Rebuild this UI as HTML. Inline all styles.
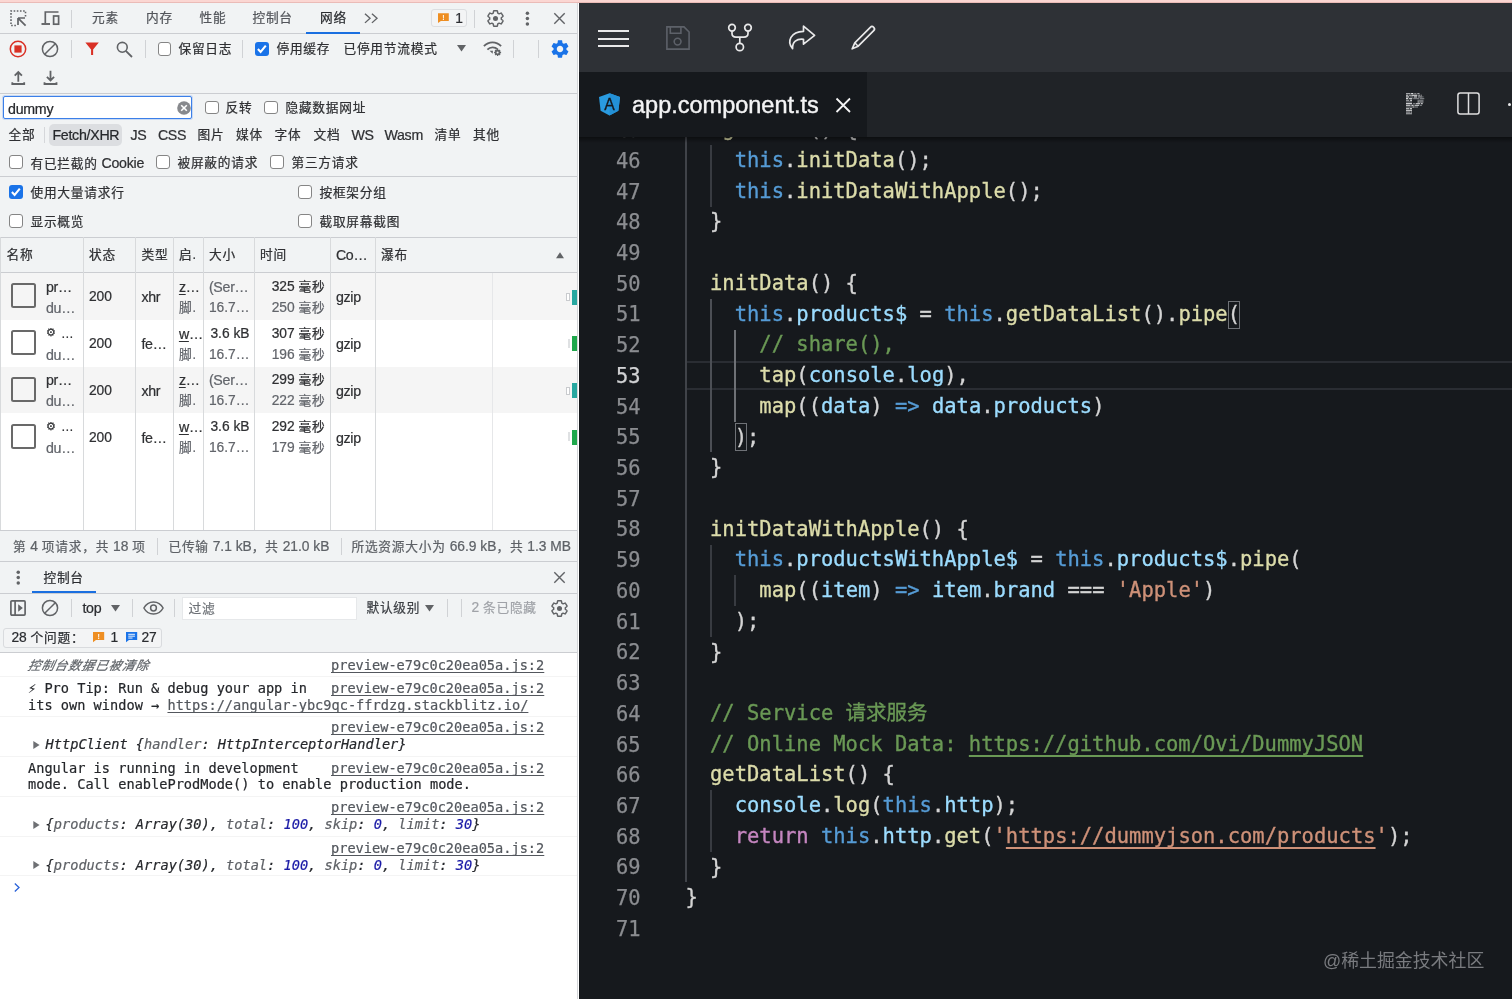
<!DOCTYPE html>
<html lang="zh-CN">
<head>
<meta charset="utf-8">
<title>DevTools Network + StackBlitz editor</title>
<style>
*{box-sizing:border-box;margin:0;padding:0;text-decoration-skip-ink:none}
html,body{width:1512px;height:999px;overflow:hidden;background:#fff}
body{position:relative;font-family:"Liberation Sans","Noto Sans CJK SC",sans-serif;font-size:13.5px;color:#2f3033}
div,span,svg{position:absolute}
span.i{position:static}
.t{white-space:nowrap;line-height:20px;height:20px;-webkit-text-stroke:0.22px;font-size:12.7px;letter-spacing:0.8px;padding-left:0.4px}
.g{color:#62656b}
.la{font-size:14.2px;letter-spacing:-0.27px}
.ld{font-size:13.8px;letter-spacing:0}
.hl{height:1px;background:#cbcdd1;left:0;width:578px}
.vl{width:1px;background:#cbcdd1}
.sep{width:1px;background:#d0d2d5;height:18px}
svg{overflow:visible}
.cb{width:13.5px;height:13.5px;border:1.2px solid #858585;border-radius:3px;background:#fff}
.cbx{width:13.5px;height:13.5px;border-radius:3px;background:#1a73e8}
.m{font-family:"DejaVu Sans Mono","Liberation Mono","Noto Sans CJK SC",monospace;font-size:13.64px;white-space:pre;line-height:16.2px;height:16.2px;color:#25272b;-webkit-text-stroke:0.2px}
.mi{font-style:oblique}
.lk{color:#53575d;text-decoration:underline;text-underline-offset:2px}
.num{color:#1a1aa6}
.cl{font-family:"DejaVu Sans Mono","Liberation Mono","Noto Sans CJK SC",monospace;font-size:20.485px;white-space:pre;line-height:30.72px;height:30.72px;color:#d4d4d4;left:685.4px;-webkit-text-stroke:0.35px}
.ln{font-family:"DejaVu Sans Mono","Liberation Mono",monospace;font-size:20.41px;white-space:pre;line-height:30.72px;height:30.72px;color:#8b8d91;left:580px;width:60.5px;text-align:right;-webkit-text-stroke:0.25px}
.k{color:#569cd6}.f{color:#dcdcaa}.v{color:#9cdcfe}.c{color:#6a9955}.s{color:#ce9178}.r{color:#c586c0}
.u{text-decoration:underline;text-underline-offset:4px;text-decoration-thickness:2px}
.ig{width:2px;background:#383b41}
</style>
</head>
<body>
<div id="left" style="left:0;top:0;width:578px;height:999px;overflow:hidden;will-change:transform"><div style="left:0;top:0;width:578px;height:999px;background:#f1f3f4"></div>
<svg style="left:10px;top:10px" width="17" height="17" viewBox="0 0 17 17"><path d="M15.5 6.5V1H1v14.5h5.5" fill="none" stroke="#616366" stroke-width="1.6" stroke-dasharray="1.6 1.55"/><path d="M8 8h7M8 8v7M8.3 8.3L15.6 15.6" fill="none" stroke="#616366" stroke-width="1.7"/></svg>
<svg style="left:41px;top:11px" width="19" height="15" viewBox="0 0 19 15"><path d="M4.3 12V1h13.2" fill="none" stroke="#616366" stroke-width="1.7"/><path d="M0.5 13h8.5" fill="none" stroke="#616366" stroke-width="1.9"/><rect x="12.6" y="5" width="5" height="8.2" fill="none" stroke="#616366" stroke-width="1.7"/></svg>
<div class="sep" style="left:71px;top:9.5px;height:18px;"></div>
<div class="t " style="left:91.5px;top:8.25px;color:#53565b">元素</div>
<div class="t " style="left:145.5px;top:8.25px;color:#53565b">内存</div>
<div class="t " style="left:199px;top:8.25px;color:#53565b">性能</div>
<div class="t " style="left:252px;top:8.25px;color:#53565b">控制台</div>
<div class="t " style="left:319.5px;top:8.25px;color:#2a2c30">网络</div>
<svg style="left:364.3px;top:13.2px" width="14.5" height="10.6" viewBox="0 0 15 12" preserveAspectRatio="none"><path d="M1 0.8L6.3 6L1 11.2M8.2 0.8L13.5 6L8.2 11.2" fill="none" stroke="#616366" stroke-width="1.4"/></svg>
<div style="left:431px;top:9.3px;width:36px;height:17.5px;border:1px solid #dcdee1;border-radius:3px;background:#f3f4f5"></div>
<svg style="left:438px;top:12.6px" width="10.8" height="10.2" viewBox="0 0 12 11"><path d="M0 0h12v8.6H3.2L0 11z" fill="#ee8e22"/><text x="6" y="7.3" font-family="Liberation Sans, sans-serif" font-weight="bold" font-size="7.6" text-anchor="middle" fill="#fff">!</text></svg>
<div class="t " style="left:454.8px;top:8.55px;color:#2a2c30"><span class="i ld">1</span></div>
<div class="sep" style="left:474px;top:9.5px;height:18px;"></div>
<svg style="left:487.4px;top:9.7px" width="17" height="17" viewBox="1.5 1.5 21 21"><path d="M19.14 12.94c.04-.3.06-.61.06-.94 0-.32-.02-.64-.07-.94l2.03-1.58c.18-.14.23-.41.12-.61l-1.92-3.32c-.12-.22-.37-.29-.59-.22l-2.39.96c-.5-.38-1.03-.7-1.62-.94l-.36-2.54c-.04-.24-.24-.41-.48-.41h-3.84c-.24 0-.43.17-.47.41l-.36 2.54c-.59.24-1.13.57-1.62.94l-2.39-.96c-.22-.08-.47 0-.59.22L2.74 8.87c-.12.21-.08.47.12.61l2.03 1.58c-.05.3-.09.63-.09.94s.02.64.07.94l-2.03 1.58c-.18.14-.23.41-.12.61l1.92 3.32c.12.22.37.29.59.22l2.39-.96c.5.38 1.03.7 1.62.94l.36 2.54c.05.24.24.41.48.41h3.84c.24 0 .44-.17.47-.41l.36-2.54c.59-.24 1.13-.56 1.62-.94l2.39.96c.22.08.47 0 .59-.22l1.92-3.32c.12-.22.07-.47-.12-.61l-2.01-1.58z" fill="none" stroke="#616366" stroke-width="1.8" stroke-linejoin="round"/><circle cx="12" cy="12" r="3.1" fill="#616366"/></svg>
<svg style="left:524px;top:10px" width="7" height="17" viewBox="0 0 7 17"><circle cx="3.4" cy="3.2" r="1.75" fill="#616366"/><circle cx="3.4" cy="8.6" r="1.75" fill="#616366"/><circle cx="3.4" cy="14" r="1.75" fill="#616366"/></svg>
<svg style="left:553.5px;top:12.5px" width="11" height="11" viewBox="0 0 11 11"><path d="M0.3 0.3L10.7 10.7M10.7 0.3L0.3 10.7" stroke="#616366" stroke-width="1.4"/></svg>
<div class="hl" style="top:33px;left:0px;width:578px;"></div>
<svg style="left:9px;top:40px" width="18" height="18" viewBox="0 0 18 18"><circle cx="9" cy="9" r="7.7" fill="none" stroke="#d93025" stroke-width="1.5"/><rect x="5.4" y="5.4" width="7.2" height="7.2" fill="#d93025"/></svg>
<svg style="left:41px;top:40px" width="18" height="18" viewBox="0 0 18 18"><circle cx="9" cy="9" r="7.6" fill="none" stroke="#616366" stroke-width="1.5"/><path d="M3.7 14.3L14.3 3.7" stroke="#616366" stroke-width="1.5"/></svg>
<div class="sep" style="left:71px;top:40.0px;height:18px;"></div>
<svg style="left:85.2px;top:42px" width="14.2" height="14" viewBox="0 0 15 15"><path d="M0.3 0.5h14.4L8.6 8v6H6.4V8z" fill="#d93025"/></svg>
<svg style="left:115.5px;top:41px" width="17" height="17" viewBox="0 0 17 17"><circle cx="6.3" cy="6.3" r="4.9" fill="none" stroke="#616366" stroke-width="1.6"/><path d="M9.8 9.8L16 16" stroke="#616366" stroke-width="1.8"/></svg>
<div class="sep" style="left:145px;top:40.0px;height:18px;"></div>
<div class="cb" style="left:157.5px;top:42.3px"></div>
<div class="t " style="left:178px;top:39.25px;">保留日志</div>
<div class="sep" style="left:242px;top:40.0px;height:18px;"></div>
<div class="cbx" style="left:255px;top:42.3px"><svg width="13.5" height="13.5" viewBox="0 0 13.5 13.5" style="left:0;top:0"><path d="M2.9 7.1 L5.6 9.9 L10.8 3.7" fill="none" stroke="#fff" stroke-width="2.1"/></svg></div>
<div class="t " style="left:276px;top:39.25px;">停用缓存</div>
<div class="t " style="left:343px;top:39.25px;">已停用节流模式</div>
<svg style="left:456.5px;top:45px" width="9" height="7" viewBox="0 0 9 7"><path d="M0 0h9L4.5 6.6z" fill="#616366"/></svg>
<svg style="left:482.8px;top:41px" width="19" height="15" viewBox="0 0 19 15"><path d="M0.9 5.1C5.8 0 13.2 0 18.1 5.1" fill="none" stroke="#616366" stroke-width="1.8"/><path d="M4.4 8.6C7.2 5.7 11.8 5.7 14.8 8.4" fill="none" stroke="#616366" stroke-width="1.8"/><path d="M6.6 9.8L9.6 12.8L10 9.8z" fill="#616366"/><circle cx="14.6" cy="11.500" r="1.900" fill="none" stroke="#616366" stroke-width="1.700"/><path d="M14.600 8v1.300M14.600 13.700v1.300M11.100 11.500h1.300M16.800 11.500h1.300M12.100 9l.9.900M16.200 13.100l.9.900M17.100 9l-.9.900M13 13.100l-.9.900" stroke="#616366" stroke-width="1.300"/></svg>
<div class="sep" style="left:513px;top:40.0px;height:18px;"></div>
<div class="sep" style="left:538px;top:40.0px;height:18px;"></div>
<svg style="left:550.5px;top:40px" width="18" height="18" viewBox="2 2 20 20"><path fill-rule="evenodd" d="M19.14 12.94c.04-.3.06-.61.06-.94 0-.32-.02-.64-.07-.94l2.03-1.58c.18-.14.23-.41.12-.61l-1.92-3.32c-.12-.22-.37-.29-.59-.22l-2.39.96c-.5-.38-1.03-.7-1.62-.94l-.36-2.54c-.04-.24-.24-.41-.48-.41h-3.84c-.24 0-.43.17-.47.41l-.36 2.54c-.59.24-1.13.57-1.62.94l-2.39-.96c-.22-.08-.47 0-.59.22L2.74 8.87c-.12.21-.08.47.12.61l2.03 1.58c-.05.3-.09.63-.09.94s.02.64.07.94l-2.03 1.58c-.18.14-.23.41-.12.61l1.92 3.32c.12.22.37.29.59.22l2.39-.96c.5.38 1.03.7 1.62.94l.36 2.54c.05.24.24.41.48.41h3.84c.24 0 .44-.17.47-.41l.36-2.54c.59-.24 1.13-.56 1.62-.94l2.39.96c.22.08.47 0 .59-.22l1.92-3.32c.12-.22.07-.47-.12-.61l-2.01-1.58zM12 15.6c-1.98 0-3.6-1.62-3.6-3.6s1.62-3.6 3.6-3.6 3.6 1.62 3.6 3.6-1.62 3.6-3.6 3.6z" fill="#1a73e8"/></svg>
<svg style="left:11px;top:70px" width="15" height="15" viewBox="0 0 15 15"><path d="M7.300 11.700V2M3.700 5.600L7.300 2L10.900 5.600M1.300 12.300V14H13.200V12.300" fill="none" stroke="#616366" stroke-width="1.800"/></svg>
<svg style="left:42.500px;top:70px" width="15" height="15" viewBox="0 0 15 15"><path d="M7.500 0.800V10.200M3.900 6.800L7.500 10.400L11.100 6.800M1.500 12.300V14H13.500V12.300" fill="none" stroke="#616366" stroke-width="1.800"/></svg>
<div class="hl" style="top:93px;left:0px;width:578px;"></div>
<div style="left:2.5px;top:95.8px;width:189px;height:23.4px;border:1.5px solid #3b7fe8;border-radius:2px;background:#fff;box-shadow:0 0 0 1px rgba(80,140,240,.25)"></div>
<div class="t " style="left:7.7px;top:98.55px;color:#26282c"><span class="i la">dummy</span></div>
<svg style="left:176.5px;top:101px" width="14" height="14" viewBox="0 0 14 14"><circle cx="7" cy="7" r="6.8" fill="#87898d"/><path d="M4.2 4.2L9.8 9.8M9.8 4.2L4.2 9.8" stroke="#fff" stroke-width="1.6"/></svg>
<div class="cb" style="left:205px;top:100.8px"></div>
<div class="t " style="left:225px;top:98.35px;">反转</div>
<div class="cb" style="left:264px;top:100.8px"></div>
<div class="t " style="left:285px;top:98.35px;">隐藏数据网址</div>
<div class="t " style="left:8px;top:125.25px;">全部</div>
<div class="sep" style="left:43.5px;top:127.0px;height:16px;background:#d5d7da;"></div>
<div style="left:49px;top:124px;width:73px;height:22px;border-radius:5px;background:#dcdee1"></div>
<div class="t " style="left:52px;top:125.25px;color:#26282c"><span class="i la">Fetch/XHR</span></div>
<div class="t " style="left:130px;top:125.25px;"><span class="i la">JS</span></div>
<div class="t " style="left:157.5px;top:125.25px;"><span class="i la">CSS</span></div>
<div class="t " style="left:197px;top:125.25px;">图片</div>
<div class="t " style="left:235.5px;top:125.25px;">媒体</div>
<div class="t " style="left:274px;top:125.25px;">字体</div>
<div class="t " style="left:313px;top:125.25px;">文档</div>
<div class="t " style="left:351px;top:125.25px;"><span class="i la">WS</span></div>
<div class="t " style="left:384px;top:125.25px;"><span class="i la">Wasm</span></div>
<div class="t " style="left:434px;top:125.25px;">清单</div>
<div class="t " style="left:472.5px;top:125.25px;">其他</div>
<div class="cb" style="left:9px;top:155.3px"></div>
<div class="t " style="left:30px;top:152.75px;">有已拦截的<span class="i la"> Cookie</span></div>
<div class="cb" style="left:156px;top:155.3px"></div>
<div class="t " style="left:177px;top:152.75px;">被屏蔽的请求</div>
<div class="cb" style="left:270px;top:155.3px"></div>
<div class="t " style="left:291px;top:152.75px;">第三方请求</div>
<div class="hl" style="top:176px;left:0px;width:578px;"></div>
<div class="cbx" style="left:9.2px;top:185.2px"><svg width="13.5" height="13.5" viewBox="0 0 13.5 13.5" style="left:0;top:0"><path d="M2.9 7.1 L5.6 9.9 L10.8 3.7" fill="none" stroke="#fff" stroke-width="2.1"/></svg></div>
<div class="t " style="left:30px;top:182.85px;">使用大量请求行</div>
<div class="cb" style="left:298px;top:185.3px"></div>
<div class="t " style="left:319px;top:182.85px;">按框架分组</div>
<div class="cb" style="left:9.2px;top:214.3px"></div>
<div class="t " style="left:30px;top:211.85px;">显示概览</div>
<div class="cb" style="left:298px;top:214.3px"></div>
<div class="t " style="left:319px;top:211.85px;">截取屏幕截图</div>
<div style="left:0;top:237px;width:578px;height:293px;background:#fff"></div>
<div style="left:0;top:237px;width:578px;height:36px;background:#f1f3f4"></div>
<div style="left:0;top:273px;width:578px;height:46.8px;background:#f5f5f5"></div>
<div style="left:0;top:366.6px;width:578px;height:46.8px;background:#f5f5f5"></div>
<div class="hl" style="top:237px;left:0px;width:578px;"></div>
<div class="hl" style="top:272px;left:0px;width:578px;"></div>
<div class="vl" style="left:0px;top:237px;height:293px;background:#d8dadc"></div>
<div class="vl" style="left:83px;top:237px;height:293px;background:#d8dadc"></div>
<div class="vl" style="left:135px;top:237px;height:293px;background:#d8dadc"></div>
<div class="vl" style="left:173px;top:237px;height:293px;background:#d8dadc"></div>
<div class="vl" style="left:203px;top:237px;height:293px;background:#d8dadc"></div>
<div class="vl" style="left:254px;top:237px;height:293px;background:#d8dadc"></div>
<div class="vl" style="left:330px;top:237px;height:293px;background:#d8dadc"></div>
<div class="vl" style="left:375px;top:237px;height:293px;background:#d8dadc"></div>
<div class="vl" style="left:491.5px;top:273px;height:257px;background:#e6e7e9"></div>
<div class="vl" style="left:577px;top:237px;height:293px;background:#d8dadc"></div>
<div class="t " style="left:6px;top:245.25px;">名称</div>
<div class="t " style="left:88.5px;top:245.25px;">状态</div>
<div class="t " style="left:141px;top:245.25px;">类型</div>
<div class="t " style="left:178.5px;top:245.25px;">启.</div>
<div class="t " style="left:208.5px;top:245.25px;">大小</div>
<div class="t " style="left:259.5px;top:245.25px;">时间</div>
<div class="t " style="left:335.5px;top:245.25px;"><span class="i la">Co…</span></div>
<div class="t " style="left:380.5px;top:245.25px;">瀑布</div>
<svg style="left:555.5px;top:252.3px" width="8" height="6.2" viewBox="0 0 9 7"><path d="M0 7h9L4.5 0.3z" fill="#616366"/></svg>
<div style="left:11.3px;top:283.3px;width:25px;height:25px;border:2.3px solid #696969;border-radius:2.5px"></div>
<div class="t " style="left:45.5px;top:276.75px;"><span class="i la">pr…</span></div>
<div class="t g" style="left:45.5px;top:297.75px;"><span class="i la">du…</span></div>
<div class="t " style="left:88.5px;top:287.45px;"><span class="i ld">200</span></div>
<div class="t " style="left:141px;top:287.45px;"><span class="i la">xhr</span></div>
<div class="t " style="left:178.5px;top:276.75px;"><span class="i la" style="text-decoration:underline;text-underline-offset:2px">z</span><span class="i la">…</span></div>
<div class="t g" style="left:178.5px;top:297.75px;">脚.</div>
<div class="t g" style="left:208.5px;top:276.75px;"><span class="i la">(Ser…</span></div>
<div class="t g" style="left:208.5px;top:297.75px;"><span class="i ld">16.7…</span></div>
<div class="t " style="left:254.5px;top:276.75px;width:71px;text-align:right"><span class="i ld">325 </span>毫秒</div>
<div class="t g" style="left:254.5px;top:297.75px;width:71px;text-align:right"><span class="i ld">250 </span>毫秒</div>
<div class="t " style="left:335.5px;top:287.45px;"><span class="i la">gzip</span></div>
<div style="left:566px;top:293px;width:4px;height:8px;border:1px solid #c9cbce;background:#fff"></div>
<div style="left:572px;top:289.5px;width:5px;height:15px;background:#27a7a0"></div>
<div style="left:11.3px;top:330.1px;width:25px;height:25px;border:2.3px solid #696969;border-radius:2.5px"></div>
<div class="t " style="left:45.5px;top:323.55px;"><span class="i" style="font-size:11px;position:relative;top:-1.5px">⚙</span> …</div>
<div class="t g" style="left:45.5px;top:344.55px;"><span class="i la">du…</span></div>
<div class="t " style="left:88.5px;top:334.25px;"><span class="i ld">200</span></div>
<div class="t " style="left:141px;top:334.25px;"><span class="i la">fe…</span></div>
<div class="t " style="left:178.5px;top:323.55px;"><span class="i la" style="text-decoration:underline;text-underline-offset:2px">w</span><span class="i la">…</span></div>
<div class="t g" style="left:178.5px;top:344.55px;">脚.</div>
<div class="t " style="left:210px;top:323.55px;"><span class="i ld">3.6 kB</span></div>
<div class="t g" style="left:208.5px;top:344.55px;"><span class="i ld">16.7…</span></div>
<div class="t " style="left:254.5px;top:323.55px;width:71px;text-align:right"><span class="i ld">307 </span>毫秒</div>
<div class="t g" style="left:254.5px;top:344.55px;width:71px;text-align:right"><span class="i ld">196 </span>毫秒</div>
<div class="t " style="left:335.5px;top:334.25px;"><span class="i la">gzip</span></div>
<div style="left:568px;top:338.8px;width:1.5px;height:9px;background:#dfe1e3"></div>
<div style="left:572px;top:336.3px;width:5px;height:15px;background:#1fa84c"></div>
<div style="left:11.3px;top:376.90000000000003px;width:25px;height:25px;border:2.3px solid #696969;border-radius:2.5px"></div>
<div class="t " style="left:45.5px;top:370.35px;"><span class="i la">pr…</span></div>
<div class="t g" style="left:45.5px;top:391.35px;"><span class="i la">du…</span></div>
<div class="t " style="left:88.5px;top:381.05px;"><span class="i ld">200</span></div>
<div class="t " style="left:141px;top:381.05px;"><span class="i la">xhr</span></div>
<div class="t " style="left:178.5px;top:370.35px;"><span class="i la" style="text-decoration:underline;text-underline-offset:2px">z</span><span class="i la">…</span></div>
<div class="t g" style="left:178.5px;top:391.35px;">脚.</div>
<div class="t g" style="left:208.5px;top:370.35px;"><span class="i la">(Ser…</span></div>
<div class="t g" style="left:208.5px;top:391.35px;"><span class="i ld">16.7…</span></div>
<div class="t " style="left:254.5px;top:370.35px;width:71px;text-align:right"><span class="i ld">299 </span>毫秒</div>
<div class="t g" style="left:254.5px;top:391.35px;width:71px;text-align:right"><span class="i ld">222 </span>毫秒</div>
<div class="t " style="left:335.5px;top:381.05px;"><span class="i la">gzip</span></div>
<div style="left:566px;top:386.6px;width:4px;height:8px;border:1px solid #c9cbce;background:#fff"></div>
<div style="left:572px;top:383.1px;width:5px;height:15px;background:#27a7a0"></div>
<div style="left:11.3px;top:423.7px;width:25px;height:25px;border:2.3px solid #696969;border-radius:2.5px"></div>
<div class="t " style="left:45.5px;top:417.15px;"><span class="i" style="font-size:11px;position:relative;top:-1.5px">⚙</span> …</div>
<div class="t g" style="left:45.5px;top:438.15px;"><span class="i la">du…</span></div>
<div class="t " style="left:88.5px;top:427.85px;"><span class="i ld">200</span></div>
<div class="t " style="left:141px;top:427.85px;"><span class="i la">fe…</span></div>
<div class="t " style="left:178.5px;top:417.15px;"><span class="i la" style="text-decoration:underline;text-underline-offset:2px">w</span><span class="i la">…</span></div>
<div class="t g" style="left:178.5px;top:438.15px;">脚.</div>
<div class="t " style="left:210px;top:417.15px;"><span class="i ld">3.6 kB</span></div>
<div class="t g" style="left:208.5px;top:438.15px;"><span class="i ld">16.7…</span></div>
<div class="t " style="left:254.5px;top:417.15px;width:71px;text-align:right"><span class="i ld">292 </span>毫秒</div>
<div class="t g" style="left:254.5px;top:438.15px;width:71px;text-align:right"><span class="i ld">179 </span>毫秒</div>
<div class="t " style="left:335.5px;top:427.85px;"><span class="i la">gzip</span></div>
<div style="left:568px;top:432.4px;width:1.5px;height:9px;background:#dfe1e3"></div>
<div style="left:572px;top:429.9px;width:5px;height:15px;background:#1fa84c"></div>
<div style="left:0;top:530px;width:578px;height:32px;background:#f1f3f4"></div>
<div class="hl" style="top:530px;left:0px;width:578px;"></div>
<div class="t " style="left:12.5px;top:536.75px;color:#5e6267">第<span class="i ld"> 4 </span>项请求，共<span class="i ld"> 18 </span>项</div>
<div class="sep" style="left:157px;top:538.0px;height:17px;"></div>
<div class="t " style="left:168px;top:536.75px;color:#5e6267">已传输<span class="i ld"> 7.1 kB</span>，共<span class="i ld"> 21.0 kB</span></div>
<div class="sep" style="left:340.5px;top:538.0px;height:17px;"></div>
<div class="t " style="left:351px;top:536.75px;color:#5e6267">所选资源大小为<span class="i ld"> 66.9 kB</span>，共<span class="i ld"> 1.3 MB</span></div>
<div class="hl" style="top:561px;left:0px;width:578px;"></div>
<svg style="left:15px;top:569px" width="7" height="17" viewBox="0 0 7 17"><circle cx="3.25" cy="3.3" r="1.75" fill="#616366"/><circle cx="3.25" cy="8.6" r="1.75" fill="#616366"/><circle cx="3.25" cy="14" r="1.75" fill="#616366"/></svg>
<div class="t " style="left:43px;top:567.75px;color:#2a2c30">控制台</div>
<svg style="left:553.5px;top:572px" width="11" height="11" viewBox="0 0 11 11"><path d="M0.3 0.3L10.7 10.7M10.7 0.3L0.3 10.7" stroke="#616366" stroke-width="1.4"/></svg>
<div class="hl" style="top:592.5px;left:0px;width:578px;"></div>
<svg style="left:10px;top:600px" width="16" height="16" viewBox="0 0 16 16"><rect x="0.9" y="0.9" width="14.2" height="14.2" rx="1" fill="none" stroke="#616366" stroke-width="1.7"/><path d="M5.100 1v14" stroke="#616366" stroke-width="1.700"/><path d="M8.200 4.300L12.800 8L8.200 11.700z" fill="#616366"/></svg>
<svg style="left:41px;top:599px" width="18" height="18" viewBox="0 0 18 18"><circle cx="9" cy="9" r="7.6" fill="none" stroke="#616366" stroke-width="1.5"/><path d="M3.7 14.3L14.3 3.7" stroke="#616366" stroke-width="1.5"/></svg>
<div class="sep" style="left:71px;top:599.0px;height:18px;"></div>
<div class="t " style="left:82px;top:598.25px;color:#2a2c30"><span class="i la">top</span></div>
<svg style="left:111px;top:604.5px" width="9" height="7" viewBox="0 0 9 7"><path d="M0 0h9L4.5 6.6z" fill="#616366"/></svg>
<div class="sep" style="left:132px;top:599.0px;height:18px;"></div>
<svg style="left:143px;top:601px" width="21" height="14" viewBox="0 0 21 14"><path d="M0.9 7C3 3 6.5 0.9 10.5 0.9S18 3 20.1 7C18 11 14.5 13.1 10.5 13.1S3 11 0.9 7z" fill="none" stroke="#616366" stroke-width="1.5"/><circle cx="10.5" cy="7" r="2.9" fill="none" stroke="#616366" stroke-width="1.5"/></svg>
<div class="sep" style="left:174px;top:599.0px;height:18px;"></div>
<div style="left:182px;top:597px;width:175px;height:23px;background:#fff;border:1px solid #e6e8ea"></div>
<div class="t " style="left:188px;top:598.75px;color:#6e7277">过滤</div>
<div class="t " style="left:366px;top:598.25px;color:#3c3f44">默认级别</div>
<svg style="left:424.5px;top:604.5px" width="9" height="7" viewBox="0 0 9 7"><path d="M0 0h9L4.5 6.6z" fill="#616366"/></svg>
<div class="sep" style="left:446.5px;top:599.0px;height:18px;"></div>
<div class="sep" style="left:460.5px;top:599.0px;height:18px;"></div>
<div class="t " style="left:471px;top:598.25px;color:#a0a3a8"><span class="i ld">2 </span>条已隐藏</div>
<svg style="left:551px;top:599.7px" width="17" height="17" viewBox="1.5 1.5 21 21"><path d="M19.14 12.94c.04-.3.06-.61.06-.94 0-.32-.02-.64-.07-.94l2.03-1.58c.18-.14.23-.41.12-.61l-1.92-3.32c-.12-.22-.37-.29-.59-.22l-2.39.96c-.5-.38-1.03-.7-1.62-.94l-.36-2.54c-.04-.24-.24-.41-.48-.41h-3.84c-.24 0-.43.17-.47.41l-.36 2.54c-.59.24-1.13.57-1.62.94l-2.39-.96c-.22-.08-.47 0-.59.22L2.74 8.87c-.12.21-.08.47.12.61l2.03 1.58c-.05.3-.09.63-.09.94s.02.64.07.94l-2.03 1.58c-.18.14-.23.41-.12.61l1.92 3.32c.12.22.37.29.59.22l2.39-.96c.5.38 1.03.7 1.62.94l.36 2.54c.05.24.24.41.48.41h3.84c.24 0 .44-.17.47-.41l.36-2.54c.59-.24 1.13-.56 1.62-.94l2.39.96c.22.08.47 0 .59-.22l1.92-3.32c.12-.22.07-.47-.12-.61l-2.01-1.58z" fill="none" stroke="#616366" stroke-width="1.8" stroke-linejoin="round"/><circle cx="12" cy="12" r="3.1" fill="#616366"/></svg>
<div style="left:3px;top:627.5px;width:158.5px;height:20.5px;border:1px solid #d9dbde;border-radius:3px;background:#f3f4f5"></div>
<div class="t " style="left:11px;top:628.25px;color:#2a2c30"><span class="i ld">28 </span>个问题：</div>
<svg style="left:93.3px;top:632.4px" width="11.2" height="10.4" viewBox="0 0 12 11"><path d="M0 0h12v8.6H3.2L0 11z" fill="#ee8e22"/><text x="6" y="7.3" font-family="Liberation Sans, sans-serif" font-weight="bold" font-size="7.6" text-anchor="middle" fill="#fff">!</text></svg>
<div class="t " style="left:110px;top:628.25px;color:#2a2c30"><span class="i ld">1</span></div>
<svg style="left:126px;top:632.4px" width="11.2" height="10.4" viewBox="0 0 12 11"><path d="M0 0h12v8.6H3.2L0 11z" fill="#1a73e8"/><path d="M2.4 2.4h7.2M2.4 4.4h7.2M2.4 6.4h4.6" stroke="#fff" stroke-width="1"/></svg>
<div class="t " style="left:141px;top:628.25px;color:#2a2c30"><span class="i ld">27</span></div>
<div class="hl" style="top:652px;left:0px;width:578px;"></div>
<div style="left:0;top:653px;width:578px;height:346px;background:#fff"></div>
<div class="t" style="left:28px;top:656.3px;font-style:italic;color:#5f6368"><span class="i" style="display:inline-block;transform:skewX(-12deg);position:relative">控制台数据已被清除</span></div>
<div class="m " style="left:331px;top:657.40px"><span class="i lk">preview-e79c0c20ea05a.js:2</span></div>
<div style="left:0;top:676px;width:578px;height:1px;background:#f4f4f4"></div>
<div class="m " style="left:28px;top:680.40px">⚡ Pro Tip: Run &amp; debug your app in</div>
<div class="m " style="left:331px;top:680.40px"><span class="i lk">preview-e79c0c20ea05a.js:2</span></div>
<div class="m " style="left:28px;top:696.60px">its own window → <span class="i lk">https://angular-ybc9qc-ffrdzg.stackblitz.io/</span></div>
<div style="left:0;top:716px;width:578px;height:1px;background:#f4f4f4"></div>
<div class="m " style="left:331px;top:719.20px"><span class="i lk">preview-e79c0c20ea05a.js:2</span></div>
<svg style="left:32.5px;top:740.5px" width="7" height="8" viewBox="0 0 7 8"><path d="M0.3 0L6.6 4L0.3 8z" fill="#6e7074"/></svg>
<div class="m mi" style="left:45.6px;top:736.20px">HttpClient {<span class="i" style="color:#5e6166">handler</span>: HttpInterceptorHandler}</div>
<div style="left:0;top:756px;width:578px;height:1px;background:#f4f4f4"></div>
<div class="m " style="left:28px;top:759.90px">Angular is running in development</div>
<div class="m " style="left:331px;top:759.90px"><span class="i lk">preview-e79c0c20ea05a.js:2</span></div>
<div class="m " style="left:28px;top:776.10px">mode. Call enableProdMode() to enable production mode.</div>
<div style="left:0;top:795.5px;width:578px;height:1px;background:#f4f4f4"></div>
<div class="m " style="left:331px;top:799.40px"><span class="i lk">preview-e79c0c20ea05a.js:2</span></div>
<svg style="left:32.5px;top:820.8px" width="7" height="8" viewBox="0 0 7 8"><path d="M0.3 0L6.6 4L0.3 8z" fill="#6e7074"/></svg>
<div class="m mi" style="left:45.6px;top:816.40px">{<span class="i" style="color:#5e6166">products</span>: Array(30), <span class="i" style="color:#5e6166">total</span>: <span class="i num">100</span>, <span class="i" style="color:#5e6166">skip</span>: <span class="i num">0</span>, <span class="i" style="color:#5e6166">limit</span>: <span class="i num">30</span>}</div>
<div style="left:0;top:836px;width:578px;height:1px;background:#f4f4f4"></div>
<div class="m " style="left:331px;top:840.20px"><span class="i lk">preview-e79c0c20ea05a.js:2</span></div>
<svg style="left:32.5px;top:861.3px" width="7" height="8" viewBox="0 0 7 8"><path d="M0.3 0L6.6 4L0.3 8z" fill="#6e7074"/></svg>
<div class="m mi" style="left:45.6px;top:856.90px">{<span class="i" style="color:#5e6166">products</span>: Array(30), <span class="i" style="color:#5e6166">total</span>: <span class="i num">100</span>, <span class="i" style="color:#5e6166">skip</span>: <span class="i num">0</span>, <span class="i" style="color:#5e6166">limit</span>: <span class="i num">30</span>}</div>
<div style="left:0;top:875px;width:578px;height:1px;background:#f4f4f4"></div>
<svg style="left:14px;top:882.5px" width="6" height="9" viewBox="0 0 6 9"><path d="M0.8 0.6L5 4.5L0.8 8.4" fill="none" stroke="#2b63d9" stroke-width="1.3"/></svg>
<div style="left:306px;top:32px;width:54px;height:2px;background:#1a6fe0"></div>
<div style="left:32px;top:591px;width:64px;height:2px;background:#1a6fe0"></div>
</div>
<div style="left:577px;top:0;width:1px;height:999px;background:#d3d5d8"></div>
<div style="left:578px;top:0;width:2px;height:999px;background:#fff"></div>
<div id="right" style="left:0;top:0;width:1512px;height:999px;clip-path:inset(0 0 0 579px);will-change:transform">
<div style="left:579px;top:0;width:933px;height:999px;background:#16191d"></div>
<div style="left:579px;top:3px;width:933px;height:69px;background:#2e3136"></div>
<div style="left:579px;top:72px;width:933px;height:64.5px;background:#202327"></div>
<div style="left:579px;top:72px;width:288px;height:64.5px;background:#16191d"></div>
<div style="left:598px;top:29.8px;width:31px;height:2px;background:#e9e9ea"></div>
<div style="left:598px;top:37.5px;width:31px;height:2px;background:#e9e9ea"></div>
<div style="left:598px;top:45.2px;width:31px;height:2px;background:#e9e9ea"></div>
<svg style="left:666px;top:25.5px" width="24" height="24" viewBox="0 0 24 24"><path d="M0.9 0.9H18L23.1 6V23.1H0.9z" fill="none" stroke="#5d6169" stroke-width="1.6"/><path d="M4.3 1v6.2h10.6V1" fill="none" stroke="#5d6169" stroke-width="1.6"/><circle cx="11.6" cy="15.6" r="3.4" fill="none" stroke="#5d6169" stroke-width="1.6"/></svg>
<svg style="left:727px;top:23px" width="26" height="29" viewBox="0 0 26 29"><circle cx="5" cy="4.7" r="3.3" fill="none" stroke="#e9e9ea" stroke-width="1.7"/><circle cx="21" cy="4.7" r="3.3" fill="none" stroke="#e9e9ea" stroke-width="1.7"/><circle cx="12.8" cy="24" r="3.7" fill="none" stroke="#e9e9ea" stroke-width="1.7"/><path d="M5 8v2.6c0 2.4 1.6 3.6 4 3.6h7.8c2.4 0 4.2-1.2 4.2-3.6V8M12.8 14.2v6.1" fill="none" stroke="#e9e9ea" stroke-width="1.7"/></svg>
<svg style="left:787px;top:25px" width="29" height="25" viewBox="0 0 29 25"><path d="M16.5 1.2L27.6 10.3L16.5 19.2V14.3C9.5 13.6 5.2 16.6 5.6 23.6C-0.6 16.8 3.8 6.4 16.5 6.3z" fill="none" stroke="#e9e9ea" stroke-width="1.7" stroke-linejoin="round"/></svg>
<svg style="left:851px;top:25px" width="25" height="25" viewBox="0 0 25 25"><path d="M19.3 2.3a2.4 2.4 0 0 1 3.4 3.4L7.2 21.2L1.2 23.8L3.8 17.8z" fill="none" stroke="#e9e9ea" stroke-width="1.7" stroke-linejoin="round"/><path d="M3.800 17.800L7.200 21.200" stroke="#e9e9ea" stroke-width="1.500"/></svg>
<div style="left:686px;top:361.24px;width:826px;height:2px;background:#2a2d33"></div>
<div style="left:686px;top:388.26px;width:826px;height:2px;background:#2a2d33"></div>
<div class="ig" style="left:685px;top:114.48px;height:768.00px;background:#404349"></div>
<div class="ig" style="left:710px;top:145.20px;height:61.44px;background:#383b41"></div>
<div class="ig" style="left:710px;top:298.80px;height:153.60px;background:#4c4f55"></div>
<div class="ig" style="left:710px;top:544.56px;height:92.16px;background:#383b41"></div>
<div class="ig" style="left:710px;top:790.32px;height:61.44px;background:#383b41"></div>
<div class="ig" style="left:734px;top:329.52px;height:92.16px;background:#6e7176"></div>
<div class="ig" style="left:734px;top:575.28px;height:30.72px;background:#383b41"></div>
<div style="left:1228.05px;top:300.60px;width:12.4px;height:28px;border:1px solid #6f7277"></div>
<div style="left:734.73px;top:423.48px;width:12.4px;height:28px;border:1px solid #6f7277"></div>
<div class="ln" style="top:115.13px">45</div>
<div class="cl" style="top:114.33px">  <span class="i f">ngOnInit</span>() {</div>
<div class="ln" style="top:145.85px">46</div>
<div class="cl" style="top:145.05px">    <span class="i k">this</span>.<span class="i f">initData</span>();</div>
<div class="ln" style="top:176.57px">47</div>
<div class="cl" style="top:175.77px">    <span class="i k">this</span>.<span class="i f">initDataWithApple</span>();</div>
<div class="ln" style="top:207.29px">48</div>
<div class="cl" style="top:206.49px">  }</div>
<div class="ln" style="top:238.01px">49</div>
<div class="ln" style="top:268.73px">50</div>
<div class="cl" style="top:267.93px">  <span class="i f">initData</span>() {</div>
<div class="ln" style="top:299.45px">51</div>
<div class="cl" style="top:298.65px">    <span class="i k">this</span>.<span class="i v">products$</span> = <span class="i k">this</span>.<span class="i f">getDataList</span>().<span class="i f">pipe</span>(</div>
<div class="ln" style="top:330.17px">52</div>
<div class="cl" style="top:329.37px">      <span class="i c">// share(),</span></div>
<div class="ln" style="top:360.89px;color:#d2d3d5">53</div>
<div class="cl" style="top:360.09px">      <span class="i f">tap</span>(<span class="i v">console</span>.<span class="i v">log</span>),</div>
<div class="ln" style="top:391.61px">54</div>
<div class="cl" style="top:390.81px">      <span class="i f">map</span>((<span class="i v">data</span>) <span class="i k">=&gt;</span> <span class="i v">data</span>.<span class="i v">products</span>)</div>
<div class="ln" style="top:422.33px">55</div>
<div class="cl" style="top:421.53px">    );</div>
<div class="ln" style="top:453.05px">56</div>
<div class="cl" style="top:452.25px">  }</div>
<div class="ln" style="top:483.77px">57</div>
<div class="ln" style="top:514.49px">58</div>
<div class="cl" style="top:513.69px">  <span class="i f">initDataWithApple</span>() {</div>
<div class="ln" style="top:545.21px">59</div>
<div class="cl" style="top:544.41px">    <span class="i k">this</span>.<span class="i v">productsWithApple$</span> = <span class="i k">this</span>.<span class="i v">products$</span>.<span class="i f">pipe</span>(</div>
<div class="ln" style="top:575.93px">60</div>
<div class="cl" style="top:575.13px">      <span class="i f">map</span>((<span class="i v">item</span>) <span class="i k">=&gt;</span> <span class="i v">item</span>.<span class="i v">brand</span> === <span class="i s">&#x27;Apple&#x27;</span>)</div>
<div class="ln" style="top:606.65px">61</div>
<div class="cl" style="top:605.85px">    );</div>
<div class="ln" style="top:637.37px">62</div>
<div class="cl" style="top:636.57px">  }</div>
<div class="ln" style="top:668.09px">63</div>
<div class="ln" style="top:698.81px">64</div>
<div class="cl" style="top:698.01px">  <span class="i c">// Service 请求服务</span></div>
<div class="ln" style="top:729.53px">65</div>
<div class="cl" style="top:728.73px">  <span class="i c">// Online Mock Data: </span><span class="i c u">https://github.com/Ovi/DummyJSON</span></div>
<div class="ln" style="top:760.25px">66</div>
<div class="cl" style="top:759.45px">  <span class="i f">getDataList</span>() {</div>
<div class="ln" style="top:790.97px">67</div>
<div class="cl" style="top:790.17px">    <span class="i v">console</span>.<span class="i f">log</span>(<span class="i k">this</span>.<span class="i v">http</span>);</div>
<div class="ln" style="top:821.69px">68</div>
<div class="cl" style="top:820.89px">    <span class="i r">return</span> <span class="i k">this</span>.<span class="i v">http</span>.<span class="i f">get</span>(<span class="i s">&#x27;</span><span class="i s u">https://dummyjson.com/products</span><span class="i s">&#x27;</span>);</div>
<div class="ln" style="top:852.41px">69</div>
<div class="cl" style="top:851.61px">  }</div>
<div class="ln" style="top:883.13px">70</div>
<div class="cl" style="top:882.33px">}</div>
<div class="ln" style="top:913.85px">71</div>
<div style="left:579px;top:72px;width:933px;height:64.5px;background:#202327"></div>
<div style="left:579px;top:72px;width:288px;height:64.5px;background:#16191d"></div>
<div style="left:579px;top:136.5px;width:933px;height:6px;background:linear-gradient(rgba(0,0,0,.45),rgba(0,0,0,0))"></div>
<svg style="left:598.6px;top:93px" width="21" height="22.8" viewBox="0 0 22 23.5"><path d="M11 0L0 3.9L1.7 18.4L11 23.5L20.300 18.4L22 3.9z" fill="#2a9be0"/><path d="M11 0L22 3.9L20.300 18.4L11 23.5z" fill="#2390d6"/><text x="11" y="17.2" font-family="Liberation Sans, sans-serif" font-size="16.5" text-anchor="middle" fill="#16191d" stroke="#16191d" stroke-width="0.3">A</text></svg>
<div class="t" style="left:632px;top:89px;height:32px;line-height:32px;font-size:23.5px;letter-spacing:0;padding:0;color:#f4f4f5;-webkit-text-stroke:0.4px">app.component.ts</div>
<svg style="left:836px;top:97.5px" width="14.500" height="14.500" viewBox="0 0 14.500 14.500"><path d="M0.500 0.500L14 14M14 0.500L0.500 14" stroke="#f4f4f5" stroke-width="1.800"/></svg>
<svg style="left:1406.3px;top:93.4px" width="19" height="22" viewBox="0 0 19 22"><rect x="0.0" y="0.00" width="4.5" height="1.15" fill="#a3a5a8"/><rect x="5.1" y="0.00" width="2.2" height="1.15" fill="#dcddde"/><rect x="8.2" y="0.00" width="2.2" height="1.15" fill="#7c7f83"/><rect x="11.3" y="0.00" width="2.2" height="1.15" fill="#a3a5a8"/><rect x="0.0" y="1.68" width="2.2" height="1.15" fill="#c4c5c7"/><rect x="2.8" y="1.68" width="2.2" height="1.15" fill="#a3a5a8"/><rect x="5.3" y="1.68" width="6.0" height="1.15" fill="#dcddde"/><rect x="12.2" y="1.68" width="2.2" height="1.15" fill="#a3a5a8"/><rect x="15.3" y="1.68" width="0.6" height="1.15" fill="#c4c5c7"/><rect x="0.0" y="3.36" width="3.2" height="1.15" fill="#dcddde"/><rect x="4.1" y="3.36" width="3.2" height="1.15" fill="#7c7f83"/><rect x="7.9" y="3.36" width="3.2" height="1.15" fill="#dcddde"/><rect x="12.0" y="3.36" width="4.5" height="1.15" fill="#a3a5a8"/><rect x="16.8" y="3.36" width="0.7" height="1.15" fill="#7c7f83"/><rect x="0.0" y="5.04" width="2.2" height="1.15" fill="#dcddde"/><rect x="3.1" y="5.04" width="3.2" height="1.15" fill="#c4c5c7"/><rect x="7.2" y="5.04" width="6.0" height="1.15" fill="#7c7f83"/><rect x="13.8" y="5.04" width="4.5" height="1.15" fill="#7c7f83"/><rect x="0.0" y="6.72" width="3.2" height="1.15" fill="#a3a5a8"/><rect x="4.1" y="6.72" width="1.9" height="1.15" fill="#dcddde"/><rect x="11.5" y="6.72" width="6.0" height="1.15" fill="#7c7f83"/><rect x="0.0" y="8.40" width="6.0" height="1.15" fill="#7c7f83"/><rect x="11.5" y="8.40" width="2.2" height="1.15" fill="#c4c5c7"/><rect x="14.0" y="8.40" width="3.5" height="1.15" fill="#a3a5a8"/><rect x="0.0" y="10.08" width="6.0" height="1.15" fill="#dcddde"/><rect x="6.9" y="10.08" width="2.2" height="1.15" fill="#7c7f83"/><rect x="9.7" y="10.08" width="4.5" height="1.15" fill="#c4c5c7"/><rect x="15.1" y="10.08" width="1.6" height="1.15" fill="#dcddde"/><rect x="0.0" y="11.76" width="4.5" height="1.15" fill="#c4c5c7"/><rect x="5.4" y="11.76" width="2.2" height="1.15" fill="#dcddde"/><rect x="8.5" y="11.76" width="4.5" height="1.15" fill="#c4c5c7"/><rect x="13.6" y="11.76" width="2.3" height="1.15" fill="#7c7f83"/><rect x="0.0" y="13.44" width="6.0" height="1.15" fill="#7c7f83"/><rect x="6.3" y="13.44" width="2.2" height="1.15" fill="#c4c5c7"/><rect x="8.8" y="13.44" width="3.2" height="1.15" fill="#7c7f83"/><rect x="0.0" y="15.12" width="3.2" height="1.15" fill="#c4c5c7"/><rect x="3.8" y="15.12" width="2.2" height="1.15" fill="#dcddde"/><rect x="0.0" y="16.80" width="6.0" height="1.15" fill="#c4c5c7"/><rect x="0.0" y="18.48" width="4.5" height="1.15" fill="#a3a5a8"/><rect x="5.1" y="18.48" width="0.9" height="1.15" fill="#c4c5c7"/><rect x="0.0" y="20.16" width="6.0" height="1.15" fill="#a3a5a8"/></svg>
<svg style="left:1456.500px;top:92px" width="23" height="23" viewBox="0 0 23 23"><rect x="0.9" y="0.9" width="21.2" height="21.2" rx="2.3" fill="none" stroke="#dfdfe0" stroke-width="1.5"/><path d="M11.500 1v21" stroke="#dfdfe0" stroke-width="1.5"/></svg>
<div style="left:1507.500px;top:102.500px;width:3.500px;height:3.500px;border-radius:50%;background:#e9e9ea"></div>
<div class="t" style="left:1323px;top:948px;height:26px;line-height:26px;font-size:17.9px;letter-spacing:0;padding:0;-webkit-text-stroke:0;color:#797b7f">@稀土掘金技术社区</div>
</div>
<div id="pink" style="left:0;top:0;width:1512px;height:3.4px;background:linear-gradient(#fbd6d2 0,#fbd6d2 60%,#e9b9b5 85%,#e4b6b2 100%)"></div>
</body>
</html>
